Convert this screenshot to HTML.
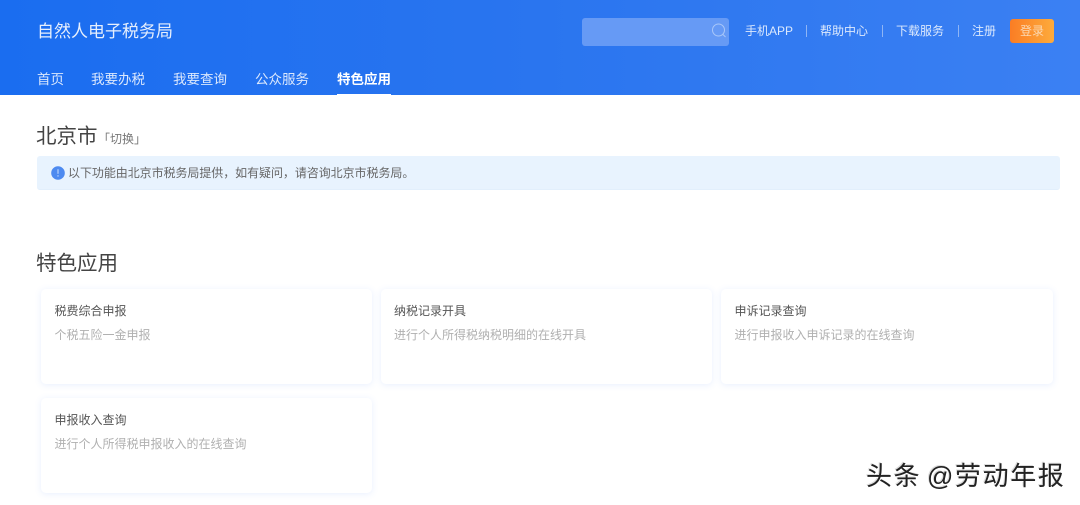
<!DOCTYPE html>
<html lang="zh">
<head>
<meta charset="utf-8">
<style>
*{margin:0;padding:0;box-sizing:border-box}
html,body{width:1080px;height:505px;overflow:hidden;background:#fff}
body{position:relative;font-family:"Liberation Sans","Noto Sans CJK SC",sans-serif}
.a{position:absolute;white-space:nowrap}
.hdr{position:absolute;left:0;top:0;width:1080px;height:95px;background:linear-gradient(90deg,#1a6df0 0%,#2a75ef 50%,#3b80f3 100%)}
.nav{top:71px;font-size:13.5px;line-height:18px;color:#dbe8fd}
.top{top:22px;font-size:12px;line-height:18px;color:#dce9fd}
.sep{position:absolute;top:25px;width:1px;height:12px;background:#8fb5f5}
.card{position:absolute;width:331px;height:95px;background:#fff;border-radius:5px;box-shadow:0 1px 7px rgba(80,130,245,.13)}
.t{position:absolute;left:13.5px;top:13px;font-size:12px;line-height:18px;color:#555;white-space:nowrap}
.d{position:absolute;left:13.5px;top:37px;font-size:12px;line-height:18px;color:#b0b0b0;white-space:nowrap}
</style>
</head>
<body>
<div class="hdr"></div>
<div class="a" style="left:37px;top:20px;font-size:17px;line-height:24px;color:#e6effd">自然人电子税务局</div>
<div class="a" style="left:582px;top:18px;width:147px;height:28px;background:#669af5;border-radius:3px"></div>
<svg class="a" style="left:710px;top:22px" width="18" height="18" viewBox="0 0 18 18" fill="none" stroke="#a9c7f9" stroke-width="1"><circle cx="8.5" cy="8" r="6"/><path d="M13 12.5l2.5 2.5"/></svg>
<div class="a top" style="left:745px">手机APP</div>
<div class="sep" style="left:806px"></div>
<div class="a top" style="left:820px">帮助中心</div>
<div class="sep" style="left:882px"></div>
<div class="a top" style="left:896px">下载服务</div>
<div class="sep" style="left:958px"></div>
<div class="a top" style="left:972px">注册</div>
<div class="a" style="left:1010px;top:19px;width:44px;height:24px;background:linear-gradient(90deg,#fb7d24,#fdab3c);border-radius:3px;color:#fbd9b4;font-size:12px;line-height:24px;text-align:center">登录</div>
<div class="a nav" style="left:37px">首页</div>
<div class="a nav" style="left:91px">我要办税</div>
<div class="a nav" style="left:173px">我要查询</div>
<div class="a nav" style="left:255px">公众服务</div>
<div class="a nav" style="left:337px;color:#fff;font-weight:700">特色应用</div>
<div class="a" style="left:337px;top:94px;width:54px;height:2px;background:#fff"></div>
<div class="a" style="left:36px;top:123px;font-size:20.5px;line-height:28px;color:#444">北京市</div>
<div class="a" style="left:98px;top:130px;font-size:12px;line-height:18px;color:#777">「</div>
<div class="a" style="left:110px;top:130px;font-size:12px;line-height:18px;color:#777">切换」</div>
<div class="a" style="left:37px;top:156px;width:1023px;height:34px;background:#e8f3fe;border-bottom:1px solid #e2effc;border-radius:3px"></div>
<svg class="a" style="left:51px;top:166px" width="14" height="14" viewBox="0 0 14 14"><circle cx="7" cy="7" r="6.8" fill="#4d8af0"/><rect x="6.4" y="3.2" width="1.2" height="4.6" fill="#b9d2fa"/><rect x="6.4" y="9.2" width="1.2" height="1.4" fill="#b9d2fa"/></svg>
<div class="a" style="left:68px;top:164px;font-size:12px;line-height:18px;color:#666;letter-spacing:-.06px">以下功能由北京市税务局提供，如有疑问，请咨询北京市税务局。</div>
<div class="a" style="left:36px;top:249px;font-size:20.5px;line-height:30px;color:#444">特色应用</div>
<div class="card" style="left:41px;top:289px"><div class="t">税费综合申报</div><div class="d">个税五险一金申报</div></div>
<div class="card" style="left:381px;top:289px"><div class="t" style="left:13px">纳税记录开具</div><div class="d" style="left:13px">进行个人所得税纳税明细的在线开具</div></div>
<div class="card" style="left:721px;top:289px;width:332px"><div class="t">申诉记录查询</div><div class="d">进行申报收入申诉记录的在线查询</div></div>
<div class="card" style="left:41px;top:398px"><div class="t">申报收入查询</div><div class="d">进行个人所得税申报收入的在线查询</div></div>
<div class="a" style="left:866px;top:459px;font-size:26px;line-height:34px;letter-spacing:1.6px;word-spacing:-3px;color:#222;text-shadow:1px 1px 0 #fff,-1px -1px 0 #ddd">头条 @劳动年报</div>
</body>
</html>
